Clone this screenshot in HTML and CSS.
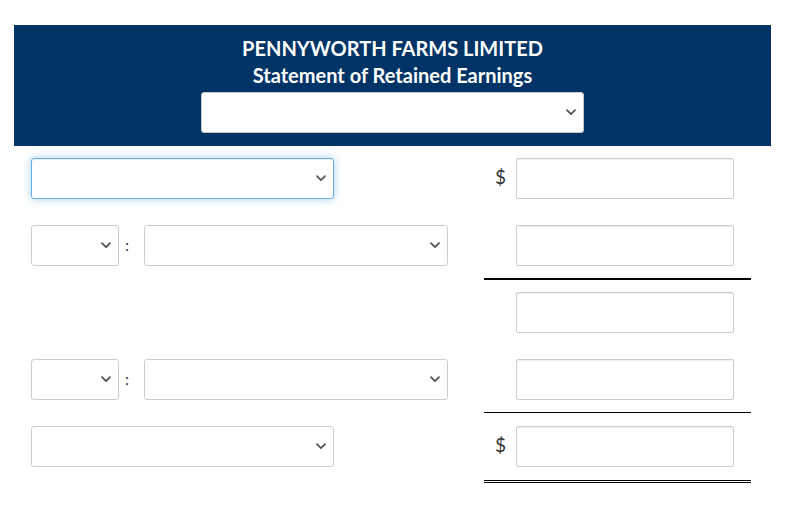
FILE: index.html
```html
<!DOCTYPE html>
<html lang="en">
<head>
<meta charset="utf-8">
<title>Statement of Retained Earnings</title>
<link rel="stylesheet" href="styles.css">
</head>
<body>
<div class="sheet">
  <header class="head">
    <div class="title">PENNYWORTH FARMS LIMITED</div>
    <div class="title">Statement of Retained Earnings</div>
    <div class="select select-head"><svg class="chev" width="10" height="7" viewBox="0 0 10 7"><polyline points="1,1.2 5,5.2 9,1.2"/></svg></div>
  </header>

  <div class="row">
    <div class="left">
      <div class="select select-wide focused"><svg class="chev" width="10" height="7" viewBox="0 0 10 7"><polyline points="1,1.2 5,5.2 9,1.2"/></svg></div>
    </div>
    <div class="right">
      <span class="cur">$</span>
      <div class="input"></div>
    </div>
  </div>

  <div class="row">
    <div class="left">
      <div class="select select-small"><svg class="chev" width="10" height="7" viewBox="0 0 10 7"><polyline points="1,1.2 5,5.2 9,1.2"/></svg></div>
      <span class="colon">:</span>
      <div class="select select-mid"><svg class="chev" width="10" height="7" viewBox="0 0 10 7"><polyline points="1,1.2 5,5.2 9,1.2"/></svg></div>
    </div>
    <div class="right rule-thick">
      <span class="cur"></span>
      <div class="input"></div>
    </div>
  </div>

  <div class="row row-tight">
    <div class="left"></div>
    <div class="right">
      <span class="cur"></span>
      <div class="input"></div>
    </div>
  </div>

  <div class="row">
    <div class="left">
      <div class="select select-small"><svg class="chev" width="10" height="7" viewBox="0 0 10 7"><polyline points="1,1.2 5,5.2 9,1.2"/></svg></div>
      <span class="colon">:</span>
      <div class="select select-mid"><svg class="chev" width="10" height="7" viewBox="0 0 10 7"><polyline points="1,1.2 5,5.2 9,1.2"/></svg></div>
    </div>
    <div class="right rule-thin">
      <span class="cur"></span>
      <div class="input"></div>
    </div>
  </div>

  <div class="row">
    <div class="left">
      <div class="select select-wide"><svg class="chev" width="10" height="7" viewBox="0 0 10 7"><polyline points="1,1.2 5,5.2 9,1.2"/></svg></div>
    </div>
    <div class="right rule-double">
      <span class="cur">$</span>
      <div class="input"></div>
    </div>
  </div>
</div>
</body>
</html>
```

FILE: styles.css
```css
html, body {
  margin: 0;
  padding: 0;
  background: #ffffff;
}

body {
  font-family: Lato, "Liberation Sans", Arial, sans-serif;
  color: #333333;
}

.sheet {
  width: 757px;
  margin: 25px 0 0 14px;
}

.head {
  background: #003366;
  height: 121px;
  box-sizing: border-box;
  padding: 10px 0 13px;
  display: flex;
  flex-direction: column;
  align-items: center;
}

.title {
  color: #ffffff;
  font-weight: 700;
  font-size: 20px;
  line-height: 27px;
}

.select {
  box-sizing: border-box;
  height: 41px;
  background: #ffffff;
  border: 1px solid #cccccc;
  border-radius: 3px;
  display: flex;
  align-items: center;
  justify-content: flex-end;
  padding-right: 7px;
}

.select-head {
  width: 383px;
  margin-top: 3px;
  border-color: #c8c8c8;
}

.chev {
  display: block;
  fill: none;
  stroke: #555555;
  stroke-width: 1.8;
  stroke-linecap: round;
  stroke-linejoin: round;
}

.select-wide { width: 303px; }
.select-small { width: 88px; }
.select-mid { width: 304px; }

.focused {
  border-color: #66afe9;
  box-shadow: inset 0 1px 1px rgba(0, 0, 0, 0.075), 0 0 8px rgba(102, 175, 233, 0.6);
}

.row {
  display: grid;
  grid-template-columns: 417px 267px;
  column-gap: 36px;
  padding-left: 17px;
}

.left {
  display: flex;
  align-items: center;
  align-self: start;
  padding: 12px 0 13px;
}

.row + .row .left { padding-top: 13px; }
.row.row-tight .left { padding-top: 12px; }

.colon {
  box-sizing: border-box;
  width: 25px;
  padding-left: 6px;
  margin-bottom: 2px;
  font-size: 16px;
  line-height: 20px;
  color: #2a3550;
}

.right {
  display: flex;
  align-items: center;
  align-self: stretch;
  box-sizing: border-box;
  padding: 12px 0 13px;
}

.row + .row .right { padding-top: 13px; }
.row.row-tight .right { padding-top: 12px; }

.right .cur {
  width: 22px;
  margin-right: 10px;
  margin-bottom: 3px;
  text-align: right;
  font-size: 19px;
  line-height: 22px;
  color: #333333;
}

.input {
  box-sizing: border-box;
  width: 218px;
  height: 41px;
  border: 1px solid #cccccc;
  border-radius: 2px;
  box-shadow: inset 0 1px 1px rgba(0, 0, 0, 0.075);
  background: #ffffff;
}

.rule-thick {
  padding-bottom: 12px;
  border-bottom: 2px solid #000000;
}

.rule-thin {
  padding-bottom: 12px;
  border-bottom: 1px solid #000000;
}

.rule-double {
  padding-bottom: 13px;
  border-bottom: 3px double #000000;
}
```
